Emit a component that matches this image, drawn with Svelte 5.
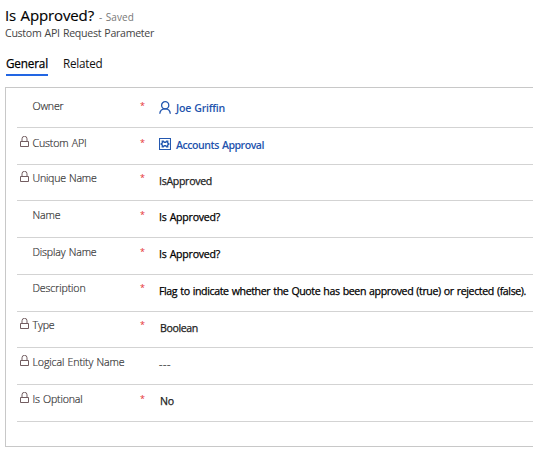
<script>
  const rows = [
    { label: 'Owner', h: 40, top: 10, vtop: 12, w: 31, value: 'Joe Griffin', vw: 49, icon: 'person', kind: 'link', req: true },
    { label: 'Custom API', h: 37, top: 7, vtop: 9, w: 54, value: 'Accounts Approval', vw: 88, icon: 'api', kind: 'link', req: true, lock: true },
    { label: 'Unique Name', h: 36, top: 5, vtop: 8, w: 64, value: 'IsApproved', vw: 53, kind: 'muted', req: true, lock: true },
    { label: 'Name', h: 37, top: 6, vtop: 8, w: 28, value: 'Is Approved?', vw: 61, kind: 'strong', req: true },
    { label: 'Display Name', h: 37, top: 6, vtop: 8, w: 64, value: 'Is Approved?', vw: 61, kind: 'strong', req: true },
    { label: 'Description', h: 37, top: 5, vtop: 8, w: 53, value: 'Flag to indicate whether the Quote has been approved (true) or rejected (false).', vw: 367, kind: 'strong', req: true },
    { label: 'Type', h: 36, top: 5, vtop: 8, w: 22, value: 'Boolean', vw: 38, kind: 'muted inset', req: true, lock: true },
    { label: 'Logical Entity Name', h: 37, top: 6, vtop: 8, w: 92, value: '---', vw: 12, kind: 'empty', lock: true },
    { label: 'Is Optional', h: 37, top: 6, vtop: 8, w: 50, value: 'No', vw: 14, kind: 'muted inset', req: true, lock: true }
  ];

  // Spreads or tightens a text's letters so that it fills the given width.
  function fit(node, width) {
    const apply = () => {
      node.style.letterSpacing = '0px';
      const natural = node.getBoundingClientRect().width;
      node.style.letterSpacing = (width - natural) / node.textContent.length + 'px';
    };
    apply();
    document.fonts?.ready.then(apply);
  }
</script>

<main>
  <header>
    <div class="heading"><h1><span use:fit={89}>Is Approved?</span></h1><span class="saved"><span use:fit={35}>- Saved</span></span></div>
    <div class="entity"><span use:fit={149}>Custom API Request Parameter</span></div>
  </header>
  <nav>
    <span class="tab active"><span use:fit={42}>General</span></span>
    <span class="tab"><span use:fit={39.5}>Related</span></span>
  </nav>
  <section>
    {#each rows as row}
      <div class="row" style:height="{row.h}px">
        <div class="label" style:padding-top="{row.top}px">
          <span class="lock">
            {#if row.lock}
              <svg width="10" height="12" viewBox="0 0 10 12" fill="none" stroke="#6b5558"><path d="M.5 5.5h8v5h-8zM2 5.5V2.8a2.5 2.5 0 0 1 5 0v2.7" stroke-width=".95" /></svg>
            {/if}
          </span>
          <span use:fit={row.w}>{row.label}</span>
        </div>
        <div class="required" style:padding-top="{row.top}px">{row.req ? '*' : ''}</div>
        <div class="value {row.kind}" style:padding-top="{row.vtop}px">
          {#if row.icon === 'person'}
            <svg width="12" height="13" viewBox="0 0 12 13" fill="none" stroke="#2458b0" stroke-width="1.3"><circle cx="6.2" cy="4.3" r="3.6" /><path d="M.8 12.8C1 9.7 3.2 7.9 6.2 7.9s4.9 1.8 5.1 4.9" /></svg>
          {:else if row.icon === 'api'}
            <svg width="12" height="12" viewBox="0 0 12 12" fill="none" stroke="#2458b0"><path d="M.5.5h11v11H.5z" stroke-width="1.1" /><path d="M5.2 4.2 4.4 3.3H3.3v1.6L2.1 6l1.2 1.1v1.6h1.1l.8-.9h1.6l.8.9h1.1V7.1L9.9 6 8.7 4.9V3.3H7.6l-.8.9z" stroke-width="1.4" /></svg>
          {/if}
          <span use:fit={row.vw}>{row.value}</span>
        </div>
      </div>
    {/each}
  </section>
</main>

<style>
  :global(body) { margin: 0; background: #fff; overflow: hidden; }
  main {
    box-sizing: border-box;
    width: 533px;
    height: 452px;
    padding: 7px 0 0 5px;
    overflow: hidden;
    font: 10.6px/16px "Open Sans", "Noto Sans", sans-serif;
    word-spacing: .7px;
    color: #333;
    white-space: nowrap;
  }
  header { height: 46px; }
  .heading { display: flex; align-items: baseline; height: 18px; line-height: 17px; }
  h1 { margin: 0; width: 94px; font-size: 15px; font-weight: 400; color: #000; -webkit-text-stroke: .15px #000; }
  .saved { font-size: 10px; color: #777; }
  .entity { line-height: 17px; color: #444; }
  nav { display: flex; gap: 15px; height: 34px; padding-left: 1px; }
  .tab { box-sizing: border-box; width: 42px; height: 23px; line-height: 20px; font-size: 11.7px; color: #111; }
  .active { border-bottom: 2px solid #2266e3; color: #000; -webkit-text-stroke: .25px #000; }
  section { box-sizing: border-box; width: 540px; height: 360px; padding-left: 11px; border: 1px solid #c8c8c8; }
  .row { box-sizing: border-box; display: grid; grid-template-columns: 123px 19px 1fr; border-bottom: 1px solid #d3d3d3; }
  .label { display: flex; color: #333; font-weight: 300; -webkit-text-stroke: .2px #333; }
  .lock { width: 12.5px; padding-left: 3px; }
  .lock svg { display: block; margin-top: 1px; }
  .required { color: #e53030; font-size: 9px; }
  .value { display: flex; align-items: flex-start; color: #000; -webkit-text-stroke: .25px currentColor; }
  .value svg { margin: 1px 5px 0 0; }
  .link { color: #2353ad; font-weight: 600; -webkit-text-stroke: 0; }
  .muted { color: #222; }
  .inset { padding-left: 1px; }
  .empty { color: #555; }
</style>
